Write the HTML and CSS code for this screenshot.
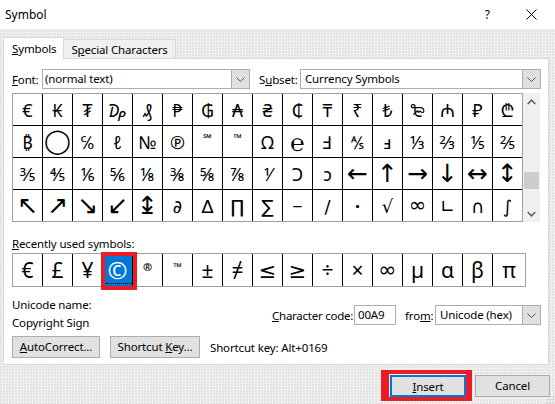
FILE: index.html
```html
<!DOCTYPE html>
<html>
<head>
<meta charset="utf-8">
<link rel="stylesheet" href="styles.css">
</head>
<body>
<div class="titlebar">
  <span class="title">Symbol</span>
  <span class="help">?</span>
  <svg class="close" width="11" height="11" viewBox="0 0 11 11"><path d="M0.5 0.5 L10.5 10.5 M10.5 0.5 L0.5 10.5" stroke="#000" stroke-width="1" fill="none"/></svg>
</div>
<div class="tabs">
  <div class="tab active"><u>S</u>ymbols</div>
  <div class="tab">S<u>p</u>ecial Characters</div>
</div>
<div class="panel">
  <div class="fontrow">
    <span class="lbl-font"><u>F</u>ont:</span>
    <div class="combo combo-font"><span class="combo-text">(normal text)</span><span class="dd"><svg width="9" height="5" viewBox="0 0 9 5"><path d="M0.5 0.5 L4.5 4.5 L8.5 0.5" stroke="#555" fill="none"/></svg></span></div>
    <span class="lbl-subset">S<u>u</u>bset:</span>
    <div class="combo combo-subset"><span class="combo-text">Currency Symbols</span><span class="dd"><svg width="9" height="5" viewBox="0 0 9 5"><path d="M0.5 0.5 L4.5 4.5 L8.5 0.5" stroke="#555" fill="none"/></svg></span></div>
  </div>
  <div class="gridwrap">
    <div class="symgrid">
      <span>€</span><span>₭</span><span>₮</span><span>₯</span><span>₰</span><span>₱</span><span>₲</span><span>₳</span><span>₴</span><span>₵</span><span>₸</span><span>₹</span><span>₺</span><span>₻</span><span>₼</span><span>₽</span><span>₾</span>
      <span>₿</span><span class="big">◯</span><span>℅</span><span>ℓ</span><span>№</span><span>℗</span><span class="sm">℠</span><span class="sm">™</span><span>Ω</span><span class="est">℮</span><span>Ⅎ</span><span>⅍</span><span>ⅎ</span><span>⅓</span><span>⅔</span><span>⅕</span><span>⅖</span>
      <span>⅗</span><span>⅘</span><span>⅙</span><span>⅚</span><span>⅛</span><span>⅜</span><span>⅝</span><span>⅞</span><span>⅟</span><span>Ↄ</span><span>ↄ</span><span class="arr">←</span><span class="arr">↑</span><span class="arr">→</span><span class="arr">↓</span><span class="arr">↔</span><span class="arr">↕</span>
      <span class="arr">↖</span><span class="arr">↗</span><span class="arr">↘</span><span class="arr">↙</span><span class="arr">↨</span><span>∂</span><span>∆</span><span>∏</span><span>∑</span><span>−</span><span>∕</span><span class="dot">·</span><span>√</span><span class="wide">∞</span><span>∟</span><span>∩</span><span>∫</span>
    </div>
    <div class="scrollbar">
      <span class="sb-btn"><svg width="9" height="6" viewBox="0 0 9 6"><path d="M0.7 5 L4.5 1.2 L8.3 5" stroke="#606060" stroke-width="1.6" fill="none"/></svg></span>
      <div class="sb-track"><div class="sb-thumb"></div></div>
      <span class="sb-btn"><svg width="9" height="6" viewBox="0 0 9 6"><path d="M0.7 1 L4.5 4.8 L8.3 1" stroke="#606060" stroke-width="1.6" fill="none"/></svg></span>
    </div>
  </div>
  <div class="recent-lbl"><u>R</u>ecently used symbols:</div>
  <div class="recent">
    <span>€</span><span>£</span><span>¥</span><span class="sel">©</span><span class="sm">®</span><span class="sm">™</span><span>±</span><span>≠</span><span>≤</span><span>≥</span><span>÷</span><span>×</span><span class="wide">∞</span><span>µ</span><span>α</span><span>β</span><span>π</span>
  </div>
  <div class="info">
    <div class="names">
      <div>Unicode name:</div>
      <div>Copyright Sign</div>
    </div>
    <div class="coderow">
      <span class="lbl-code"><u>C</u>haracter code:</span>
      <span class="codebox">00A9</span>
      <span class="lbl-from">fro<u>m</u>:</span>
      <div class="combo combo-from"><span class="combo-text">Unicode (hex)</span><span class="dd"><svg width="9" height="5" viewBox="0 0 9 5"><path d="M0.5 0.5 L4.5 4.5 L8.5 0.5" stroke="#555" fill="none"/></svg></span></div>
    </div>
  </div>
  <div class="btnrow">
    <button class="btn btn-auto"><u>A</u>utoCorrect...</button>
    <button class="btn btn-key">Shortcut <u>K</u>ey...</button>
    <span class="keytext">Shortcut key: Alt+0169</span>
  </div>
</div>
<div class="footer">
  <button class="btn btn-insert"><u>I</u>nsert</button>
  <button class="btn btn-cancel">Cancel</button>
</div>
<div class="grip"></div>
</body>
</html>
```
FILE: styles.css
```css
* { box-sizing: border-box; }
html, body { margin: 0; padding: 0; }
body {
  width: 555px;
  height: 404px;
  overflow: hidden;
  font-family: "Noto Sans", "DejaVu Sans", sans-serif;
  font-size: 11.5px;
  letter-spacing: -0.15px;
  color: #000;
  background-color: #f0f0f0;
  background-image: radial-gradient(circle at 1px 1px, #e2e2e2 0.7px, rgba(240,240,240,0) 0.9px);
  background-size: 3px 3px;
  position: relative;
}
u { text-decoration: underline; text-underline-offset: 1px; }

.titlebar {
  height: 29px;
  background: #fff;
  display: flex;
  align-items: center;
  padding-left: 5px;
  font-size: 12px;
  letter-spacing: 0;
}
.title { flex: 1; }
.help { margin-right: 36px; }
.close { margin-right: 18px; display: block; }

.tabs {
  height: 29px;
  display: flex;
  align-items: flex-end;
  padding-left: 3px;
}
.tab {
  height: 19px;
  padding: 1px 7px 0 7px;
  border: 1px solid #d9d9d9;
  border-left: none;
  border-bottom: none;
  background: #f0f0f0;
  line-height: 18px;
}
.tab.active {
  position: relative;
  z-index: 2;
  height: 22px;
  margin-bottom: -1px;
  background: #fff;
  border-left: 1px solid #d9d9d9;
  padding: 2px 7px 0 8px;
  line-height: 18px;
}

.panel {
  margin: 0 6px 0 3px;
  height: 307px;
  background: #fff;
  border: 1px solid #d9d9d9;
  padding: 10px 0 0 8px;
}

.fontrow {
  display: flex;
  align-items: center;
  height: 20px;
}
.lbl-font { width: 30px; }
.lbl-subset { width: 41px; margin-left: 9px; }
.combo {
  height: 20px;
  display: flex;
  align-items: stretch;
  border: 1px solid #adadad;
  background: #fff;
}
.combo-text { flex: 1; line-height: 18px; padding-left: 2px; white-space: nowrap; overflow: hidden; }
.combo-font { width: 208px; }
.combo-subset { width: 241px; }
.combo-subset .combo-text { padding-left: 4px; }
.dd {
  width: 18px;
  background: #e0e0e0;
  border-left: 1px solid #adadad;
  display: flex;
  align-items: center;
  justify-content: center;
}

.gridwrap {
  margin-top: 4px;
  display: flex;
  height: 129px;
}
.symgrid {
  display: grid;
  grid-template-columns: repeat(17, 29px);
  grid-auto-rows: 31px;
  gap: 1px;
  background: #000;
  border: 1px solid #a0a0a0;
  font-family: "Noto Sans", "DejaVu Sans", sans-serif;
  font-size: 18px;
  letter-spacing: 0;
}
.symgrid span, .recent span {
  background: #fff;
  display: flex;
  align-items: center;
  justify-content: center;
  line-height: 1;
  overflow: hidden;
}
.symgrid .big { font-family: "DejaVu Sans", sans-serif; font-size: 24px; line-height: 31px; overflow: visible; }
.symgrid .sm { font-size: 11px; font-weight: bold; align-items: flex-start; padding-top: 6px; }
.symgrid .arr { font-family: "DejaVu Sans", sans-serif; font-size: 25px; }
.symgrid .est { font-size: 24px; }
.symgrid .wide { font-family: "DejaVu Sans", sans-serif; font-size: 21px; }
.symgrid .dot { font-size: 18px; font-weight: bold; }

.scrollbar {
  width: 17px;
  display: flex;
  flex-direction: column;
  background: #f0f0f0;
}
.sb-btn {
  height: 17px;
  display: flex;
  align-items: center;
  justify-content: center;
}
.sb-track { flex: 1; padding-top: 62px; }
.sb-thumb { width: 15px; height: 17px; margin-left: 1px; background: #cdcdcd; }

.recent-lbl {
  margin-top: 14px;
  line-height: 15px;
  height: 15px;
}
.recent {
  margin-top: 2px;
  width: 514px;
  display: grid;
  grid-template-columns: repeat(16, 29px) 32px;
  grid-auto-rows: 32px;
  gap: 1px;
  background: #000;
  border: 1px solid #a0a0a0;
  font-size: 21px;
  letter-spacing: 0;
}
.recent .sm { font-size: 11px; font-weight: bold; align-items: flex-start; padding-top: 7px; }
.recent .wide { font-family: "DejaVu Sans", sans-serif; font-size: 22px; }
.recent .sel {
  position: relative;
  overflow: visible;
  background: #0078d7;
  color: #fff;
  font-size: 24px;
}
.recent .sel::before {
  content: "";
  position: absolute;
  left: 3px;
  right: 0;
  bottom: 2px;
  border-top: 1px dotted #000;
}
.recent .sel::after {
  content: "";
  position: absolute;
  left: -2px;
  right: -5px;
  top: -2px;
  bottom: -4px;
  border: 4px solid #ed1c24;
}

.info {
  margin-top: 9px;
  display: flex;
}
.names { width: 260px; line-height: 18px; }
.coderow {
  margin-top: 9px;
  height: 20px;
  display: flex;
  align-items: center;
}
.lbl-code { width: 82px; white-space: nowrap; letter-spacing: -0.25px; }
.codebox {
  width: 42px;
  height: 20px;
  border: 1px solid #adadad;
  line-height: 18px;
  padding-left: 3px;
}
.lbl-from { margin-left: 9px; width: 30px; }
.combo-from { width: 106px; }
.combo-from .combo-text { padding-left: 4px; }

.btnrow {
  margin-top: 4px;
  display: flex;
  align-items: center;
}
.btn {
  height: 22px;
  background: #e1e1e1;
  border: 1px solid #adadad;
  font-family: inherit;
  font-size: 11.5px;
  letter-spacing: -0.15px;
  color: #000;
  padding: 0;
  line-height: 20px;
}
.btn-auto { width: 88px; }
.btn-key { width: 90px; margin-left: 10px; }
.keytext { margin-left: 10px; }

.footer {
  margin-top: 10px;
  display: flex;
  justify-content: flex-end;
  padding-right: 5px;
  gap: 9px;
}
.btn-insert {
  width: 76px;
  border: 2px solid #0078d7;
  position: relative;
}
.btn-insert::after {
  content: "";
  position: absolute;
  left: -11px;
  right: -8px;
  top: -7px;
  bottom: -6px;
  border-style: solid;
  border-color: #ed1c24;
  border-width: 4px 6px 4px 8px;
}
.btn-cancel { width: 75px; }
.grip {
  position: absolute;
  right: 1px;
  bottom: 1px;
  width: 8px;
  height: 8px;
  background-image: radial-gradient(circle, #b0b0b0 0.8px, transparent 1px);
  background-size: 3px 3px;
}
```
